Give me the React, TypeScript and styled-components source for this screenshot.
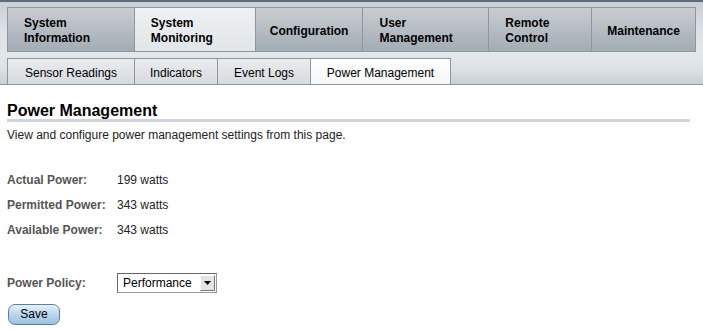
import React, { useState } from "react";
import styled, { createGlobalStyle } from "styled-components";

const GlobalStyle = createGlobalStyle`
  html, body {
    margin: 0;
    padding: 0;
    background: #ffffff;
    font-family: "Liberation Sans", Arial, sans-serif;
    font-size: 12px;
    color: #000;
  }
`;

const Page = styled.div`
  width: 703px;
  height: 330px;
  overflow: hidden;
`;

const TopBand = styled.div`
  border-top: 2px solid #5f6b78;
  background: linear-gradient(#c9cfd5, #dde2e6 60%, #e3e7ea);
  padding: 5px 7px 0 7px;
  display: flex;
`;

const MainTab = styled.div<{ active?: boolean; center?: boolean; w: number }>`
  width: ${(p) => p.w}px;
  height: 45px;
  box-sizing: border-box;
  border: 1px solid #8e979f;
  margin-left: -1px;
  background: ${(p) =>
    p.active
      ? "linear-gradient(#eef1f3, #e0e5e8)"
      : "linear-gradient(#c8cdd2, #a3acb4)"};
  display: flex;
  align-items: center;
  justify-content: ${(p) => (p.center ? "center" : "flex-start")};
  font-weight: bold;
  font-size: 12px;
  line-height: 15px;
  padding: 3px 0 0 ${(p) => (p.center ? 0 : 16)}px;
  &:first-child {
    margin-left: 0;
  }
`;

const SubBand = styled.div`
  background: linear-gradient(#e4e8eb, #dde2e6 50%, #c9cfd5);
  border-bottom: 1px solid #8e979f;
  padding: 6px 7px 0 7px;
  display: flex;
`;

const SubTab = styled.div<{ active?: boolean; w: number }>`
  width: ${(p) => p.w}px;
  height: 26px;
  box-sizing: border-box;
  border: 1px solid #8e979f;
  border-bottom: none;
  margin-left: -1px;
  padding-top: 2px;
  background: ${(p) =>
    p.active
      ? "linear-gradient(#ffffff, #f4f6f7)"
      : "linear-gradient(#e9ecee, #d6dbdf)"};
  display: flex;
  align-items: center;
  justify-content: center;
  font-size: 12px;
  &:first-child {
    margin-left: 0;
  }
`;

const Content = styled.div`
  padding: 17px 13px 0 7px;
`;

const Title = styled.h1`
  margin: 0;
  font-size: 16px;
  font-weight: bold;
  line-height: 17px;
  border-bottom: 3px solid #d1d5d9;
`;

const Description = styled.p`
  margin: 6px 0 0 0;
  font-size: 12px;
  line-height: 14px;
  color: #222;
`;

const Rows = styled.div`
  margin-top: 31px;
  display: flex;
  flex-direction: column;
  gap: 11px;
`;

const Row = styled.div`
  display: flex;
  align-items: center;
  height: 14px;
`;

const Label = styled.span`
  width: 110px;
  font-weight: bold;
  color: #555;
  font-size: 12px;
`;

const Value = styled.span`
  font-size: 12px;
  color: #222;
`;

const PolicyRow = styled.div`
  display: flex;
  align-items: center;
  margin-top: 36px;
  height: 20px;
`;

const FakeSelect = styled.div`
  width: 100px;
  height: 20px;
  box-sizing: border-box;
  border: 1px solid #999;
  border-top-color: #666;
  border-left-color: #666;
  background: #fff;
  display: flex;
  align-items: center;
  justify-content: space-between;
  padding: 0 1px 0 5px;
  font-size: 12px;
`;

const Arrow = styled.span`
  width: 15px;
  height: 16px;
  box-sizing: border-box;
  background: #e4e4e4;
  border: 1px solid #fff;
  border-right-color: #777;
  border-bottom-color: #777;
  display: flex;
  align-items: center;
  justify-content: center;
`;

const SaveButton = styled.button`
  display: block;
  margin: 11px 0 0 1px;
  width: 52px;
  height: 21px;
  border: 1px solid #5d7f9e;
  border-radius: 7px;
  background: linear-gradient(#e6f1fa, #b6d3ea 55%, #9fc2e0);
  font-family: "Liberation Sans", Arial, sans-serif;
  font-size: 12px;
  padding: 0 0 1px 0;
  color: #000;
`;

const mainTabs = [
  { label: ["System", "Information"], w: 128 },
  { label: ["System", "Monitoring"], w: 122, active: true },
  { label: ["Configuration"], w: 109, center: true },
  { label: ["User", "Management"], w: 127 },
  { label: ["Remote", "Control"], w: 104 },
  { label: ["Maintenance"], w: 105, center: true },
];

const subTabs = [
  { label: "Sensor Readings", w: 128 },
  { label: "Indicators", w: 84 },
  { label: "Event Logs", w: 94 },
  { label: "Power Management", w: 141, active: true },
];

const stats = [
  { label: "Actual Power:", value: "199 watts" },
  { label: "Permitted Power:", value: "343 watts" },
  { label: "Available Power:", value: "343 watts" },
];

export default function App() {
  const [policy] = useState("Performance");
  return (
    <Page>
      <GlobalStyle />
      <TopBand>
        {mainTabs.map((t) => (
          <MainTab
            key={t.label.join(" ")}
            w={t.w}
            active={t.active}
            center={t.center}
          >
            <span>
              {t.label[0]}
              {t.label[1] && (
                <>
                  <br />
                  {t.label[1]}
                </>
              )}
            </span>
          </MainTab>
        ))}
      </TopBand>
      <SubBand>
        {subTabs.map((t) => (
          <SubTab key={t.label} w={t.w} active={t.active}>
            {t.label}
          </SubTab>
        ))}
      </SubBand>
      <Content>
        <Title>Power Management</Title>
        <Description>
          View and configure power management settings from this page.
        </Description>
        <Rows>
          {stats.map((s) => (
            <Row key={s.label}>
              <Label>{s.label}</Label>
              <Value>{s.value}</Value>
            </Row>
          ))}
        </Rows>
        <PolicyRow>
          <Label>Power Policy:</Label>
          <FakeSelect>
            <span>{policy}</span>
            <Arrow>
              <svg width="7" height="4" viewBox="0 0 7 4">
                <path d="M0 0h7L3.5 4z" fill="#000" />
              </svg>
            </Arrow>
          </FakeSelect>
        </PolicyRow>
        <SaveButton>Save</SaveButton>
      </Content>
    </Page>
  );
}
